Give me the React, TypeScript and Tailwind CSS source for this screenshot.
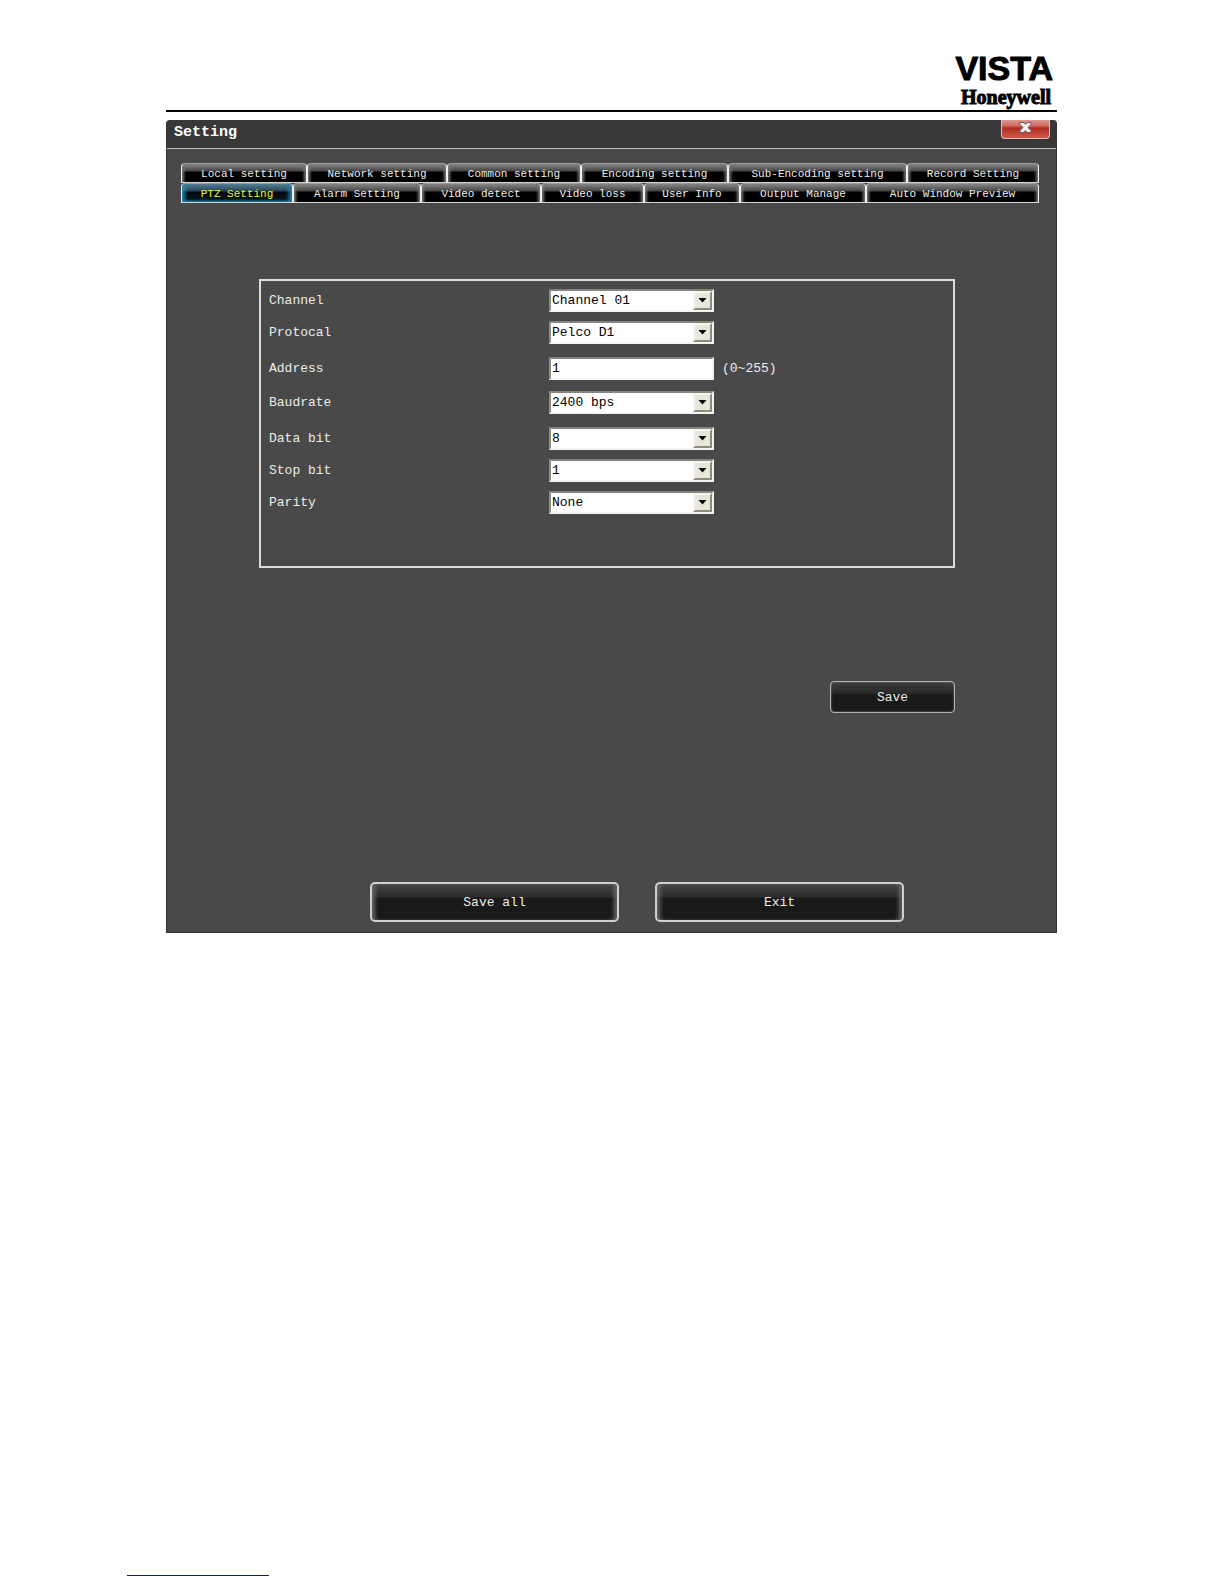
import React, { useState } from 'react';

interface Field {
  id: string;
  label: string;
  spacing: string;
  options?: string[];
  value?: string;
  hint?: string;
}

const topTabs = [
  'Local setting',
  'Network setting',
  'Common setting',
  'Encoding setting',
  'Sub-Encoding setting',
  'Record Setting',
];

const bottomTabs = [
  'PTZ Setting',
  'Alarm Setting',
  'Video detect',
  'Video loss',
  'User Info',
  'Output Manage',
  'Auto Window Preview',
];

const fields: Field[] = [
  { id: 'channel', label: 'Channel', spacing: '', options: ['Channel 01', 'Channel 02'] },
  { id: 'protocal', label: 'Protocal', spacing: 'mt-[9px]', options: ['Pelco D1', 'Pelco P'] },
  { id: 'address', label: 'Address', spacing: 'mt-[13px]', value: '1', hint: '(0~255)' },
  { id: 'baudrate', label: 'Baudrate', spacing: 'mt-[11px]', options: ['2400 bps', '4800 bps', '9600 bps'] },
  { id: 'databit', label: 'Data bit', spacing: 'mt-[13px]', options: ['8', '7', '6', '5'] },
  { id: 'stopbit', label: 'Stop bit', spacing: 'mt-[9px]', options: ['1', '2'] },
  { id: 'parity', label: 'Parity', spacing: 'mt-[9px]', options: ['None', 'Odd', 'Even'] },
];

const controlStyle =
  'block w-full h-[23px] bg-white text-black pl-px border-2 border-t-[#85857f] border-l-[#8f8f89] border-r-[#f4f4f0] border-b-[#f4f4f0] rounded-none outline-none appearance-none';

interface TabProps {
  label: string;
  active: boolean;
  onClick: () => void;
}

const Tab: React.FC<TabProps> = ({ label, active, onClick }) => {
  const look = active
    ? 'text-[#eef03a] bg-[linear-gradient(#5d7c8a_0,#23475a_7px,#02080c_8px,#06141c_15px,#1f6f96_100%)] shadow-[inset_5px_0_4px_-2px_#2b86b0,inset_-5px_0_4px_-2px_#2b86b0]'
    : 'text-[#ececec] bg-[linear-gradient(#868686_0,#454545_7px,#000_8px,#000_100%)] shadow-[inset_4px_0_3px_-2px_#777,inset_-4px_0_3px_-2px_#777]';
  return (
    <button
      type="button"
      onClick={onClick}
      className={`h-5 min-w-0 whitespace-nowrap pt-px text-[11px] leading-4 border border-t-[#9a9a9a] border-x-[#f0f0f0] border-b-[#d2d2d2] rounded-t-[4px] ${look}`}
    >
      {label}
    </button>
  );
};

const FieldRow: React.FC<{ field: Field }> = ({ field }) => {
  return (
    <div className={`flex items-center ${field.spacing}`}>
      <label htmlFor={field.id} className="w-[280px] shrink-0 text-[#ececec]">
        {field.label}
      </label>
      {field.options ? (
        <div className="relative w-[165px]">
          <select id={field.id} className={controlStyle}>
            {field.options.map((option) => (
              <option key={option}>{option}</option>
            ))}
          </select>
          <span className="pointer-events-none absolute right-[2px] top-[2px] flex h-[19px] w-[19px] items-center justify-center bg-[#e9e7d9] border-2 border-t-[#f6f5ee] border-l-[#f6f5ee] border-r-[#8d8b7c] border-b-[#8d8b7c]">
            <svg width="9" height="5" viewBox="0 0 9 5">
              <path d="M0.5 0H8.5L4.5 4.5Z" fill="#000" />
            </svg>
          </span>
        </div>
      ) : (
        <div className="w-[165px]">
          <input id={field.id} type="text" defaultValue={field.value} className={controlStyle} />
        </div>
      )}
      {field.hint && <span className="ml-2 text-[#ececec]">{field.hint}</span>}
    </div>
  );
};

const largeButton =
  'h-10 w-[249px] rounded-[5px] border-2 border-[#cfcfcf] pt-[2px] bg-[linear-gradient(#454545_0,#2c2c2c_13px,#191919_14px,#191919_100%)] shadow-[inset_5px_0_4px_-2px_#666,inset_-5px_0_4px_-2px_#666] text-[#ececec]';

const App: React.FC = () => {
  const [tab, setTab] = useState('PTZ Setting');

  return (
    <div className="flex min-h-screen flex-col bg-white font-['Liberation_Mono',monospace] text-[13px] leading-4">
      <div className="pl-[166px] pr-[167px]">
        <header className="flex h-28 flex-col items-end justify-end border-b-2 border-black pr-1 text-black">
          <div className="pb-px font-['Liberation_Sans',sans-serif] text-[34px] font-bold leading-8 [-webkit-text-stroke:1px_#000]">VISTA</div>
          <div className="pb-px pr-[2px] font-['Liberation_Serif',serif] text-[20px] font-bold leading-6 [-webkit-text-stroke:1px_#000]">Honeywell</div>
        </header>

        <main className="mt-2 rounded-t-[4px] border border-t-0 border-[#353535] bg-[#494949]">
          <div className="flex h-[29px] items-start justify-between rounded-t-[4px] border-b border-[#bdbdbd] bg-[#383838] pl-[7px] pr-[6px]">
            <h1 className="pt-[5px] text-[15px] font-bold leading-4 text-white">Setting</h1>
            <button
              type="button"
              aria-label="Close"
              className="flex h-[19px] w-[49px] items-start justify-center rounded-b-[4px] border border-t-0 border-[#e9b9b2] bg-[linear-gradient(#dc9a94_0,#d0665d_6px,#b02c22_8px,#cf5a4d_100%)] pt-[2px]"
            >
              <svg width="13" height="11" viewBox="0 0 13 11">
                <path d="M1 0.5H5L6.5 2.5L8 0.5H12V2.5L9 5.5L12 8.5V10.5H8L6.5 8.5L5 10.5H1V8.5L4 5.5L1 2.5Z" fill="#f4f0f0" stroke="#7b5555" strokeWidth="1" />
              </svg>
            </button>
          </div>

          <nav className="pl-[14px] pr-[17px] pt-[14px]">
            <div className="grid grid-cols-[126fr_140fr_134fr_147fr_179fr_132fr]">
              {topTabs.map((name) => (
                <Tab key={name} label={name} active={tab === name} onClick={() => setTab(name)} />
              ))}
            </div>
            <div className="grid grid-cols-[112fr_128fr_120fr_103fr_96fr_126fr_173fr]">
              {bottomTabs.map((name) => (
                <Tab key={name} label={name} active={tab === name} onClick={() => setTab(name)} />
              ))}
            </div>
          </nav>

          <form className="pl-[92px] pr-[101px] pt-[76px]" onSubmit={(e) => e.preventDefault()}>
            <div className="border-2 border-[#dcdcd6] pb-[52px] pl-2 pt-2">
              {fields.map((field) => (
                <FieldRow key={field.id} field={field} />
              ))}
            </div>
            <div className="flex justify-end pt-[113px]">
              <button
                type="submit"
                className="h-8 w-[125px] rounded-[4px] border border-[#b4b4b4] pt-[2px] bg-[linear-gradient(#3c3c3c_0,#2a2a2a_11px,#191919_13px,#191919_100%)] shadow-[inset_0_0_2px_#888] text-[#ececec]"
              >
                Save
              </button>
            </div>
          </form>

          <div className="flex justify-center gap-9 pb-[10px] pl-[51px] pt-[169px]">
            <button type="button" className={largeButton}>Save all</button>
            <button type="button" className={largeButton}>Exit</button>
          </div>
        </main>
      </div>

      <footer className="mt-auto pb-2 pl-[127px]">
        <hr className="h-px w-[142px] border-0 bg-[#12128c]" />
      </footer>
    </div>
  );
};

export default App;
